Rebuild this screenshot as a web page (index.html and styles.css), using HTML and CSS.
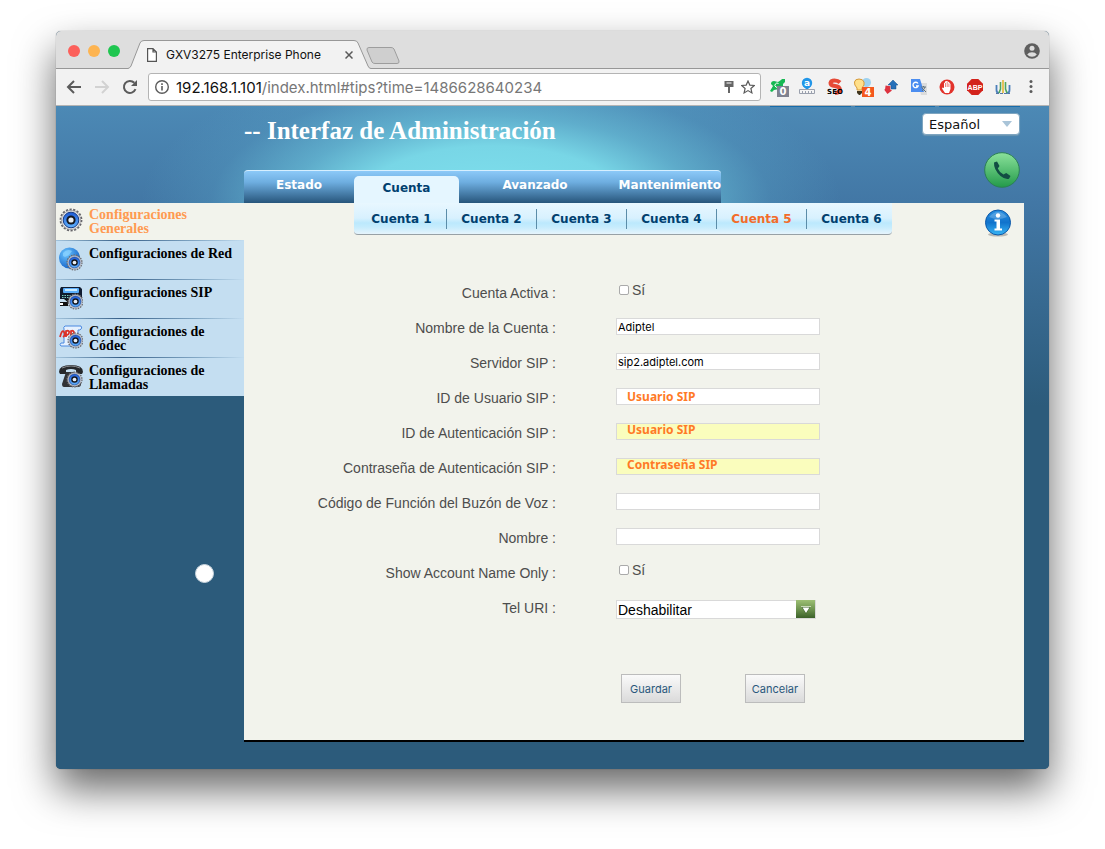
FILE: index.html
```html
<!DOCTYPE html>
<html lang="es">
<head>
<meta charset="utf-8">
<meta name="viewport" content="width=device-width, initial-scale=1">
<title>GXV3275 Enterprise Phone</title>
<link rel="stylesheet" href="styles.css">
</head>
<body>
<svg class="defs" width="0" height="0" aria-hidden="true">
  <defs>
    <linearGradient id="g-blue" x1="0" y1="0" x2="0" y2="1"><stop offset="0" stop-color="#1c59d6"/><stop offset="1" stop-color="#62b4ff"/></linearGradient>
    <linearGradient id="g-green" x1="0" y1="0" x2="0" y2="1"><stop offset="0" stop-color="#8be29b"/><stop offset="1" stop-color="#239a4a"/></linearGradient>
    <linearGradient id="g-info" x1="0" y1="0" x2="0" y2="1"><stop offset="0" stop-color="#2a8fe0"/><stop offset=".5" stop-color="#1173cc"/><stop offset="1" stop-color="#38b6f5"/></linearGradient>
    <linearGradient id="g-drop" x1="0" y1="0" x2="0" y2="1"><stop offset="0" stop-color="#9dbf74"/><stop offset=".5" stop-color="#6f9550"/><stop offset="1" stop-color="#3c6129"/></linearGradient>
    <radialGradient id="g-globe" cx=".35" cy=".3" r=".8"><stop offset="0" stop-color="#6cc6ff"/><stop offset="1" stop-color="#0d5bc4"/></radialGradient>
    <symbol id="gear" viewBox="0 0 24 24">
      <circle cx="12" cy="12" r="10.400" fill="none" stroke="#66666b" stroke-width="2" stroke-dasharray="2.200 1.430"/>
      <circle cx="12" cy="12" r="9.600" fill="#e2e2e5" stroke="#9a9aa0" stroke-width=".8"/>
      <circle cx="12" cy="12" r="7.800" fill="url(#g-blue)" stroke="#173c86"/>
      <circle cx="12" cy="12" r="4.600" fill="#15181f"/>
      <circle cx="12" cy="12" r="2.600" fill="#e9eef5"/>
    </symbol>
  </defs>
</svg>
<div class="window">
  <div class="tabstrip">
    <div class="lights"><i class="red"></i><i class="amber"></i><i class="green"></i></div>
    <div class="tab">
      <svg class="tab-shape" viewBox="0 0 243 29" preserveAspectRatio="none" aria-hidden="true"><path d="M0 28.500Q2 28 3 26L12 3Q13 .5 16 .5H226Q229 .5 230 3L240 26Q241 28.500 243 28.500V29H0Z" fill="#f2f2f2"/><path d="M0 28.500Q2 28 3 26L12 3Q13 .5 16 .5H226Q229 .5 230 3L240 26Q241 28.500 243 28.500" fill="none" stroke="#979797"/></svg>
      <svg class="tab-page" width="10" height="14" viewBox="0 0 10 14" aria-hidden="true"><path d="M.6.6H6L9.400 4V13.400H.6ZM6 .6V4H9.400" fill="#fff" stroke="#555" stroke-width="1.200"/></svg>
      <span class="tab-title">GXV3275 Enterprise Phone</span>
      <button class="plain" aria-label="Cerrar pestaña"><svg width="8" height="8" viewBox="0 0 8 8"><path d="M.5.5l7 7M7.500.5l-7 7" stroke="#5a5a5a" stroke-width="1.500"/></svg></button>
    </div>
    <button class="plain newtab" aria-label="Nueva pestaña"><svg width="34" height="17" viewBox="0 0 34 17"><path d="M3 .5H25Q27 .5 28 2L33 14Q33.500 16.500 31 16.500H9Q7 16.500 6 15L1 3Q.5.5 3 .5Z" fill="#cfcfcf" stroke="#9d9d9d"/></svg></button>
    <button class="plain profile" aria-label="Perfil"><svg width="16" height="16" viewBox="0 0 16 16"><circle cx="8" cy="8" r="7.800" fill="#5f5f5f"/><circle cx="8" cy="5.300" r="2.500" fill="#dedede"/><path d="M3.200 11.500Q4.500 9.200 8 9.200T12.800 11.500Q11 13.800 8 13.800T3.200 11.500Z" fill="#dedede"/></svg></button>
  </div>

  <div class="toolbar">
    <div class="history">
      <button class="plain" aria-label="Atrás"><svg width="16" height="16" viewBox="0 0 16 16"><path d="M15 8H2M8 2L2 8l6 6" fill="none" stroke="#5b5b5b" stroke-width="2"/></svg></button>
      <button class="plain" aria-label="Adelante"><svg width="16" height="16" viewBox="0 0 16 16"><path d="M1 8H14M8 2l6 6-6 6" fill="none" stroke="#d2d2d2" stroke-width="2"/></svg></button>
      <button class="plain" aria-label="Recargar"><svg width="16" height="16" viewBox="0 0 16 16"><path d="M13.500 10.200A6 6 0 1 1 12.300 3.800" fill="none" stroke="#5b5b5b" stroke-width="2"/><path d="M15 1V7H9Z" fill="#5b5b5b"/></svg></button>
    </div>
    <div class="address">
      <svg width="14" height="14" viewBox="0 0 14 14" aria-hidden="true"><circle cx="7" cy="7" r="6.300" fill="none" stroke="#5b5b5b" stroke-width="1.400"/><path d="M7 6v4.500M7 3.300v1.600" stroke="#5b5b5b" stroke-width="1.600"/></svg>
      <span class="url" role="textbox" aria-label="Dirección"><b>192.168.1.101</b>/index.html#tips?time=1486628640234</span>
      <svg width="10" height="14" viewBox="0 0 10 14" aria-hidden="true"><path d="M.5 1H9.500V7H6V13H4V7H.5Z" fill="#666"/><path d="M2.500 3H7.500" stroke="#fff" stroke-width="1.200"/></svg>
      <svg width="14" height="14" viewBox="0 0 14 14" aria-hidden="true"><path d="M7 1L8.800 5.100 13.300 5.500 9.900 8.500 10.900 12.900 7 10.600 3.100 12.900 4.100 8.500.7 5.500 5.200 5.100Z" fill="none" stroke="#5b5b5b" stroke-width="1.200"/></svg>
    </div>
    <div class="extensions">
      <svg viewBox="0 0 20 20"><path d="M1 14L4 9 2 7Q2 4 5 4L9 5 12 3 13 2H16V5L14 7 14 9 16 12 10 12 5 13 3 15Z" fill="#16b853"/><path d="M9.500 6.500A2.200 2.200 0 1 0 10 9.500" fill="none" stroke="#fff"/><rect x="8" y="9" width="12" height="11" fill="#7f8290"/><text class="badge" x="14" y="18" text-anchor="middle">0</text></svg>
      <svg viewBox="0 0 20 20"><path d="M6 9L10 13 14 9Z" fill="#2196e8"/><circle cx="10" cy="6" r="5.200" fill="#2196e8"/><text class="badge small" x="10" y="9" text-anchor="middle">a</text><path d="M2.500 12.500H17.500V16.500H2.500ZM5.500 14v2.500M8.500 14v2.500M11.500 14v2.500M14.500 14v2.500" fill="#f5f5f5" stroke="#9aa0ad"/></svg>
      <svg viewBox="0 0 20 20"><path d="M15 5.500Q13 3.500 9.500 3.500T5.500 6Q5.500 8.500 10 9T15 12.500 10 16" fill="none" stroke="#e64a37" stroke-width="4"/><text class="seo" x="10" y="17" text-anchor="middle">SEO</text></svg>
      <svg viewBox="0 0 20 20"><circle cx="13.500" cy="5.500" r="4.500" fill="#9ed2ef"/><path d="M4 11Q1 8 1.500 5T6 2 11 5 9 11V13H4Z" fill="#ffe08a" stroke="#d69a38"/><path d="M4 14H9V16L7 18H6L4 16Z" fill="#41361f"/><rect x="9" y="10" width="12" height="10" fill="#f4581d"/><text class="badge" x="15" y="18.500" text-anchor="middle">4</text></svg>
      <svg viewBox="0 0 20 20"><path d="M12 3L17 8H15V12H10V8H7Z" fill="#2670b9" stroke="#17528f" stroke-width=".5"/><path d="M4 9H9V12L11 13 7 17 3 13H4Z" fill="#dd3340" transform="rotate(8 7 13)"/></svg>
      <svg viewBox="0 0 20 20"><path d="M9 6H18V18H12Z" fill="#dcdcdc"/><path d="M2 2H11L15 15H2Z" fill="#4b8df0"/><path d="M9 6.500A2.700 2.700 0 1 0 9.200 9H7" fill="none" stroke="#fff" stroke-width="1.300"/><path d="M12 10h5M14.500 9v1M16 10q-1 3-3 4M13 11l4 4" fill="none" stroke="#61727c"/></svg>
      <svg viewBox="0 0 20 20"><circle cx="10" cy="10" r="7.500" fill="#e2322b"/><path d="M8 16L5 11.500 5.500 10.500 7 11V6L8 5.500V4.500L9.500 4 11 4.500 12.300 5.500 13.500 7V12L12 16Z" fill="#fff"/><path d="M8.500 6v4M10.200 5v5M11.900 6.500v3.500" stroke="#e2322b" stroke-width=".6"/></svg>
      <svg viewBox="0 0 20 20"><path d="M6.700 2H13.300L18 6.700V13.300L13.300 18H6.700L2 13.300V6.700Z" fill="#d3221b"/><text class="abp" x="10" y="12.500" text-anchor="middle">ABP</text></svg>
      <svg viewBox="0 0 20 20"><path d="M3.500 8V13Q3.500 16 6 16M16.500 8V13Q16.500 16 14 16" fill="none" stroke="#4b7fba" stroke-width="1.800"/><path d="M7.500 5V12L6 16M12.500 5V12L14 16" fill="none" stroke="#4fa65d" stroke-width="1.600"/><path d="M10 3V16" stroke="#e3b735" stroke-width="1.600"/><path d="M3 16.500H17" stroke="#5577a4" stroke-dasharray="3 1"/></svg>
      <svg viewBox="0 0 20 20"><circle cx="10" cy="4.500" r="1.500" fill="#5b5b5b"/><circle cx="10" cy="9.500" r="1.500" fill="#5b5b5b"/><circle cx="10" cy="14.500" r="1.500" fill="#5b5b5b"/></svg>
    </div>
  </div>

  <div class="page">
    <header class="header">
      <div class="brand">
        <h1>-- Interfaz de Administración</h1>
        <nav class="mainnav">
          <a href="#estado">Estado</a>
          <a href="#cuenta" class="current">Cuenta</a>
          <a href="#avanzado" class="wide">Avanzado</a>
          <a href="#mantenimiento" class="last">Mantenimiento</a>
        </nav>
      </div>
      <div class="tools">
        <div class="marks"><i></i><i></i><i></i></div>
        <div class="language">
          <select aria-label="Idioma"><option>Español</option></select>
          <svg width="10" height="6" viewBox="0 0 10 6" aria-hidden="true"><path d="M0 0H10L5 6Z" fill="#a9c4d8"/></svg>
        </div>
        <button class="plain" aria-label="Llamar"><svg width="36" height="36" viewBox="0 0 36 36"><circle cx="18" cy="18" r="17.300" fill="url(#g-green)" stroke="#2c7f55"/><path d="M10 10.500L13 9.500 15.500 14 13.800 16.500Q15.500 20.500 19.500 22.500L22.200 21 26.500 24 25 26.800Q21.500 28 16.500 24 9.500 17.500 10 10.500Z" fill="#124d43"/></svg></button>
      </div>
    </header>

    <div class="columns">
      <nav class="sidebar">
        <a href="#generales" class="current"><svg viewBox="0 0 24 24"><use href="#gear"/></svg><span>Configuraciones Generales</span></a>
        <a href="#red"><svg viewBox="0 0 24 24"><circle cx="10.500" cy="11" r="10.500" fill="url(#g-globe)"/><path d="M4 6Q8 1 13 4L10 8 6 10 4 9Z" fill="#8fd4ff" opacity=".7"/><use href="#gear" x="7" y="7" width="17" height="17"/></svg><span>Configuraciones de Red</span></a>
        <a href="#sip"><svg viewBox="0 0 24 24"><path d="M2 1H21L23 3V13H1V3Z" fill="#101c30"/><rect x="4" y="2" width="16" height="5" rx="1" fill="#5aaefb"/><path d="M6 4H18" stroke="#c9eaff" stroke-width="2"/><path d="M3 9.500H13M3 11.500H13" stroke="#79cbbb" stroke-dasharray="1.500 1"/><path d="M1 16H9V20H1ZM5 13H11V18" fill="#111"/><path d="M1 18H4" stroke="#fff" stroke-width="2"/><use href="#gear" x="8" y="7" width="17" height="17"/></svg><span>Configuraciones SIP</span></a>
        <a href="#codec"><svg viewBox="0 0 24 24"><path d="M6 1H22Q24 3 21 5H19V18H17V21H2Q0 20 2 18H5V4Q4 2 6 1Z" fill="#e5f1ff" stroke="#4a89e0"/><path d="M1 12Q3 4 5 7T4 12M7 12V6Q11 5 10 8T7 9M12 12V6Q15 5 15 8T13 9" fill="none" stroke="#dc3127" stroke-width="1.800"/><use href="#gear" x="8" y="7" width="17" height="17"/></svg><span>Configuraciones de Códec</span></a>
        <a href="#llamadas"><svg viewBox="0 0 24 24"><path d="M0 8Q0 1 12 1T24 8L23 10H17V6Q12 4 7 6V10H1Z" fill="#26282b"/><path d="M3 4Q12 0 21 4" stroke="#8b8d90" fill="none"/><path d="M7 8H16L22 20Q22 23 19 23H5Q3 23 3 20Z" fill="#313336"/><use href="#gear" x="7" y="7" width="17" height="17"/></svg><span>Configuraciones de Llamadas</span></a>
      </nav>

      <main class="content">
        <nav class="subnav">
          <a href="#cuenta1">Cuenta 1</a>
          <a href="#cuenta2">Cuenta 2</a>
          <a href="#cuenta3">Cuenta 3</a>
          <a href="#cuenta4">Cuenta 4</a>
          <a href="#cuenta5" class="current">Cuenta 5</a>
          <a href="#cuenta6">Cuenta 6</a>
        </nav>
        <button class="plain info" aria-label="Información"><svg width="28" height="28" viewBox="0 0 28 28"><ellipse cx="14" cy="25.500" rx="10" ry="2" fill="#b9b9b4"/><circle cx="14" cy="13.500" r="12.500" fill="url(#g-info)" stroke="#0d58a8"/><path d="M5 8Q14 -2 23 8Q14 12 5 8Z" fill="#fff" opacity=".22"/><circle cx="14" cy="6.500" r="2.200" fill="#fff"/><path d="M10.500 10.500H16V19.500H18V21.500H10.500V19.500H12.500V12.500H10.500Z" fill="#fff"/></svg></button>

        <form class="form">
          <div class="row"><label for="activa">Cuenta Activa :</label><div class="check"><input type="checkbox" id="activa"><label for="activa">Sí</label></div></div>
          <div class="row"><label for="nombre-cuenta">Nombre de la Cuenta :</label><input type="text" id="nombre-cuenta" value="Adiptel"></div>
          <div class="row"><label for="servidor">Servidor SIP :</label><input type="text" id="servidor" value="sip2.adiptel.com"></div>
          <div class="row"><label for="usuario">ID de Usuario SIP :</label><input type="text" id="usuario" class="note" value="Usuario SIP"></div>
          <div class="row"><label for="auth">ID de Autenticación SIP :</label><input type="text" id="auth" class="note filled" value="Usuario SIP"></div>
          <div class="row"><label for="clave">Contraseña de Autenticación SIP :</label><input type="text" id="clave" class="note filled" value="Contraseña SIP"></div>
          <div class="row"><label for="buzon">Código de Función del Buzón de Voz :</label><input type="text" id="buzon"></div>
          <div class="row"><label for="nombre">Nombre :</label><input type="text" id="nombre"></div>
          <div class="row"><label for="solo">Show Account Name Only :</label><div class="check"><input type="checkbox" id="solo"><label for="solo">Sí</label></div></div>
          <div class="row"><label for="uri">Tel URI :</label><div class="dropdown"><select id="uri"><option>Deshabilitar</option></select><svg width="19" height="18" viewBox="0 0 19 18" aria-hidden="true"><rect width="19" height="18" fill="url(#g-drop)"/><path d="M5 6H15L10 14Z" fill="#3e622e"/><path d="M6.500 7.500H13.500L10 13Z" fill="#fff"/><path d="M5 6.500H15" stroke="#c9d9b8"/></svg></div></div>
          <div class="actions"><button type="button">Guardar</button><button type="button">Cancelar</button></div>
        </form>
      </main>
    </div>
    <i class="pointer"></i>
  </div>
</div>
</body>
</html>
```
FILE: styles.css
```css
* { box-sizing: border-box; }

body {
  margin: 0;
  padding: 31px 56px 80px;
  background: #fff;
  font-family: "Liberation Sans", Arial, sans-serif;
  font-size: 14px;
}

a { text-decoration: none; }
svg { display: block; flex: none; }
.defs { position: absolute; }

.plain {
  display: block;
  padding: 0;
  border: 0;
  background: none;
}

.window {
  border-radius: 5px;
  overflow: hidden;
  background: #2c5b7b;
  box-shadow: 0 0 1px rgba(0, 0, 0, .5), 0 20px 40px rgba(0, 0, 0, .6);
}

/* Browser tabs */
.tabstrip {
  display: flex;
  align-items: flex-end;
  height: 38px;
  padding: 0 9px 0 12px;
  background: #dedede;
  border-bottom: 1px solid #979797;
}
.lights {
  display: flex;
  gap: 8px;
  width: 60px;
  padding-bottom: 11px;
}
.lights i {
  width: 12px;
  height: 12px;
  border-radius: 50%;
}
.red { background: #fc605b; }
.amber { background: #fdb451; }
.green { background: #1fc650; }

.tab {
  position: relative;
  display: flex;
  align-items: center;
  gap: 9px;
  width: 243px;
  height: 29px;
  margin-bottom: -1px;
  padding: 0 18px 0 19px;
  color: #111;
  font-family: Inter, sans-serif;
  font-size: 12px;
}
.tab-shape {
  position: absolute;
  inset: 0;
  width: 100%;
  height: 100%;
}
.tab-page, .tab-title, .tab .plain { position: relative; }
.tab-title { flex: 1; white-space: nowrap; }
.newtab { margin: 0 0 4px -5px; }
.profile { margin: 0 0 9px auto; }

/* Browser toolbar */
.toolbar {
  display: flex;
  align-items: center;
  height: 37px;
  padding: 0 8px 0 10px;
  background: #f2f2f2;
  border-bottom: 1px solid #b4b4b4;
}
.history {
  display: flex;
  gap: 12px;
  width: 82px;
}
.address {
  display: flex;
  flex: 1;
  align-items: center;
  gap: 7px;
  height: 28px;
  padding: 0 5px 0 6px;
  background: #fff;
  border: 1px solid #b4b4b4;
  border-radius: 3px;
}
.url {
  flex: 1;
  color: #777;
  font-family: Inter, sans-serif;
  font-size: 15px;
  white-space: nowrap;
}
.url b { color: #111; font-weight: 400; }
.extensions {
  display: flex;
  gap: 8px;
  margin-left: 8px;
}
.extensions svg { width: 20px; height: 20px; overflow: visible; }
.badge {
  fill: #fff;
  font: bold 10px "DejaVu Sans", sans-serif;
}
.small { font-size: 9px; }
.seo { font: bold 7px "DejaVu Sans", sans-serif; }
.abp { fill: #fff; font: bold 7px "Liberation Sans", sans-serif; }

/* Page */
.page {
  position: relative;
  padding-bottom: 27px;
  background:
    linear-gradient(#2c5b7b, #2c5b7b) 0 97px / 188px 100% no-repeat,
    radial-gradient(350px 150px at 435px 97px, #7fe1ee 0%, #78d6e6 38%, rgba(104, 190, 215, .7) 58%, rgba(86, 160, 196, .3) 80%, rgba(76, 137, 181, 0) 100%) 0 0 / 100% 97px no-repeat,
    linear-gradient(#4c89b5 0, #4277a5 97px, #2c5b7b 300px);
}
.header {
  display: flex;
  justify-content: space-between;
  height: 97px;
  padding-left: 188px;
}
.brand {
  display: flex;
  flex-direction: column;
  justify-content: space-between;
  width: 477px;
}
h1 {
  margin: 0;
  padding-top: 10px;
  color: #fff;
  font: bold 25px/30px Georgia, "Liberation Serif", serif;
  white-space: nowrap;
}
.mainnav {
  display: flex;
  align-items: flex-end;
  height: 33px;
  background: linear-gradient(#8cc9f8, #6eaee0 35%, #27557b);
  border-top: 1px solid #d6efff;
  border-radius: 4px 4px 0 0;
  font: bold 12px/28px Verdana, "DejaVu Sans", sans-serif;
}
.mainnav a {
  width: 110px;
  height: 32px;
  color: #fff;
  text-align: center;
}
.mainnav .current {
  width: 105px;
  height: 27px;
  background: #e5f6ff;
  border-radius: 5px 5px 0 0;
  color: #00406f;
  line-height: 24px;
}
.mainnav .wide { width: 152px; }
.mainnav .last {
  display: flex;
  justify-content: flex-end;
}

.tools {
  display: flex;
  flex-direction: column;
  align-items: flex-end;
  width: 250px;
  margin-right: 29px;
}
.marks {
  display: flex;
  gap: 4px;
  width: 100%;
  height: 1px;
}
.marks i { flex: 1; background: #176cab; }
.language {
  position: relative;
  width: 98px;
  margin: 6px 0 17px;
}
.language select {
  display: block;
  width: 100%;
  height: 22px;
  padding: 0 6px;
  appearance: none;
  background: #fff;
  border: 1px solid #7ea5c0;
  border-radius: 4px;
  box-shadow: 0 1px 1px #6c96b3;
  color: #111;
  font: 13px Verdana, "DejaVu Sans", sans-serif;
}
.language svg {
  position: absolute;
  top: 8px;
  right: 8px;
  pointer-events: none;
}

.columns { display: flex; align-items: flex-start; padding-right: 25px; }
.sidebar {
  width: 188px;
  flex: none;
  background: #c4def1;
}
.sidebar a {
  display: flex;
  gap: 6px;
  height: 39px;
  padding: 6px 2px 0 3px;
  border-top: 1px solid;
  border-image: linear-gradient(90deg, #a4c5dd, #365f88 35%, #84a9c6 75%, #c4def1) 1;
  color: #000;
  font: bold 14px/14px Georgia, "Liberation Serif", serif;
}
.sidebar a.current {
  height: 37px;
  padding-top: 5px;
  background: #f2f3ec;
  border: 0;
  color: #ff9a51;
}
.sidebar svg { width: 24px; height: 24px; }

.content {
  position: relative;
  flex: 1;
  min-width: 0;
  padding-bottom: 37px;
  background: #f2f3ec;
  border-bottom: 2px solid #000;
}
.subnav {
  display: flex;
  align-items: center;
  width: 538px;
  height: 32px;
  margin-left: 110px;
  padding-left: 3px;
  background: linear-gradient(#e8f7ff 0, #d8f1fe 15px, #bce9fd 20px, #c6ecfd 24px, #e6f4fc 31px);
  border-bottom: 1px solid #98a1a6;
  border-radius: 0 0 4px 4px;
}
.subnav a {
  flex: none;
  width: 90px;
  border-right: 1px solid #5b8da9;
  color: #00406f;
  font: bold 12px/20px Verdana, "DejaVu Sans", sans-serif;
  text-align: center;
}
.subnav a:last-child { border-right-color: transparent; }
.subnav .current { color: #f26c2a; }
.info {
  position: absolute;
  top: 6px;
  right: 12px;
}

/* Account form */
.form { padding-top: 40px; }
.row {
  display: grid;
  grid-template-columns: 40% 1fr;
  column-gap: 60px;
  align-items: center;
  height: 35px;
  color: #4d4d4d;
}
.row > label { text-align: right; }
.row input[type="text"] {
  width: 204px;
  height: 17px;
  margin: 0 0 2px;
  padding: 0 1px;
  background: #fff;
  border: 1px solid #d9d9d9;
  color: #000;
  font: 11px Inter, sans-serif;
}
.row input.note[type="text"] {
  padding-left: 10px;
  color: #ff7a26;
  font: bold 12px/15px "Noto Sans", sans-serif;
}
.row input.filled[type="text"] {
  padding-bottom: 4px;
  background: #fafdbd;
}
.check {
  display: flex;
  align-items: center;
  gap: 3px;
  padding: 0 0 5px 3px;
}
.check input {
  width: 10px;
  height: 10px;
  margin: 0;
  appearance: none;
  background: #fff;
  border: 1px solid #aaa;
  border-radius: 2px;
}
.dropdown {
  position: relative;
  width: 200px;
  margin-top: 4px;
}
.dropdown select {
  display: block;
  width: 100%;
  height: 19px;
  padding: 0 1px;
  appearance: none;
  background: #fff;
  border: 1px solid #d9d9d9;
  border-radius: 0;
  color: #000;
  font: 14px/16px "Liberation Sans", Arial, sans-serif;
}
.dropdown svg {
  position: absolute;
  top: 0;
  right: 1px;
  pointer-events: none;
}
.actions {
  display: flex;
  gap: 64px;
  padding: 49px 0 0 calc(40% + 65px);
}
.actions button {
  width: 60px;
  height: 29px;
  padding: 0;
  background: linear-gradient(#fafafa, #dadada);
  border: 1px solid #bcbcbc;
  color: #2a587c;
  font: 11px Inter, sans-serif;
}

.pointer {
  position: absolute;
  left: 139px;
  top: 458px;
  width: 19px;
  height: 19px;
  background: #fff;
  border: 1px solid #c9d5de;
  border-radius: 50%;
}
```
